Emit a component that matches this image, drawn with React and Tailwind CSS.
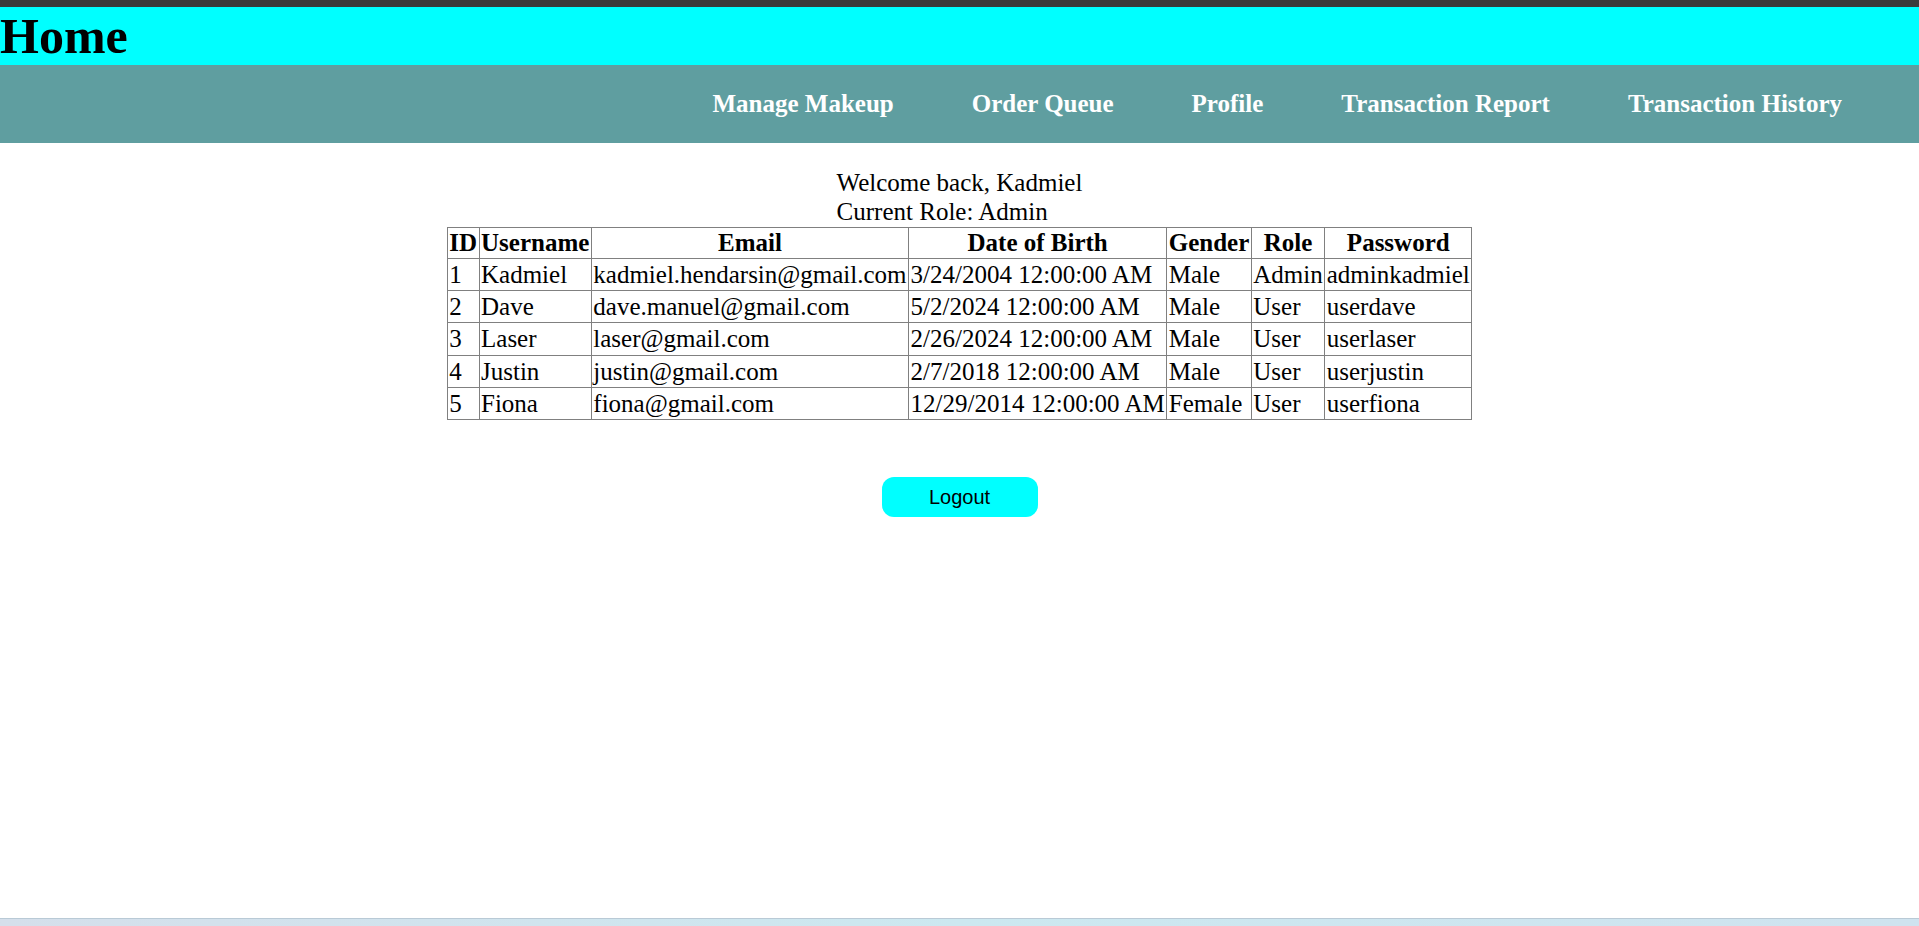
const users = [
  { id: 1, username: "Kadmiel", email: "kadmiel.hendarsin@gmail.com", dob: "3/24/2004 12:00:00 AM", gender: "Male", role: "Admin", password: "adminkadmiel" },
  { id: 2, username: "Dave", email: "dave.manuel@gmail.com", dob: "5/2/2024 12:00:00 AM", gender: "Male", role: "User", password: "userdave" },
  { id: 3, username: "Laser", email: "laser@gmail.com", dob: "2/26/2024 12:00:00 AM", gender: "Male", role: "User", password: "userlaser" },
  { id: 4, username: "Justin", email: "justin@gmail.com", dob: "2/7/2018 12:00:00 AM", gender: "Male", role: "User", password: "userjustin" },
  { id: 5, username: "Fiona", email: "fiona@gmail.com", dob: "12/29/2014 12:00:00 AM", gender: "Female", role: "User", password: "userfiona" },
]

const links = ["Manage Makeup", "Order Queue", "Profile", "Transaction Report", "Transaction History"]
const headers = ["ID", "Username", "Email", "Date of Birth", "Gender", "Role", "Password"]

const App = () => {
  return (
    <div className="min-h-[926px] flex flex-col bg-white text-black font-['Liberation_Serif','Times_New_Roman',serif]">
      <div className="h-[7px] bg-[#3b3b3b]" />
      <h1 className="bg-[#00ffff] text-[50px] font-bold leading-[58px]">Home</h1>

      <nav className="h-[78px] bg-[#5f9ea0] flex items-center justify-end pr-[38px]">
        {links.map((l) => (
          <a key={l} className="px-[39px] text-[25px] font-bold text-white cursor-pointer">
            {l}
          </a>
        ))}
      </nav>

      <main className="flex flex-col items-center pt-[26px] text-[25px] leading-[28.75px]">
        <div>
          <div>Welcome back, Kadmiel</div>
          <div>Current Role: Admin</div>
        </div>

        <table className="border-collapse border border-[#808080] leading-[29.25px]">
          <thead>
            <tr>
              {headers.map((h) => (
                <th key={h} className="border border-[#808080] px-[1.5px] py-[0.5px] font-bold text-center">
                  {h}
                </th>
              ))}
            </tr>
          </thead>
          <tbody>
            {users.map((u) => (
              <tr key={u.id}>
                <td className="border border-[#808080] px-[1.5px] py-[1px]">{u.id}</td>
                <td className="border border-[#808080] px-[1.5px] py-[1px]">{u.username}</td>
                <td className="border border-[#808080] px-[1.5px] py-[1px]">{u.email}</td>
                <td className="border border-[#808080] px-[1.5px] py-[1px]">{u.dob}</td>
                <td className="border border-[#808080] px-[1.5px] py-[1px]">{u.gender}</td>
                <td className="border border-[#808080] px-[1.5px] py-[1px]">{u.role}</td>
                <td className="border border-[#808080] px-[1.5px] py-[1px]">{u.password}</td>
              </tr>
            ))}
          </tbody>
        </table>

        <button className="mt-[57px] w-[156px] h-[40px] rounded-[12px] bg-[#00ffff] text-[20px] leading-none font-['Liberation_Sans',Arial,sans-serif] cursor-pointer">
          Logout
        </button>
      </main>

      <div className="flex-1" />
      <div className="h-[8px] border-t border-[#b9cad6] bg-linear-to-r from-[#d5dfeb] via-[#cce8f0] to-[#cfe3ef]" />
    </div>
  )
}

export default App
